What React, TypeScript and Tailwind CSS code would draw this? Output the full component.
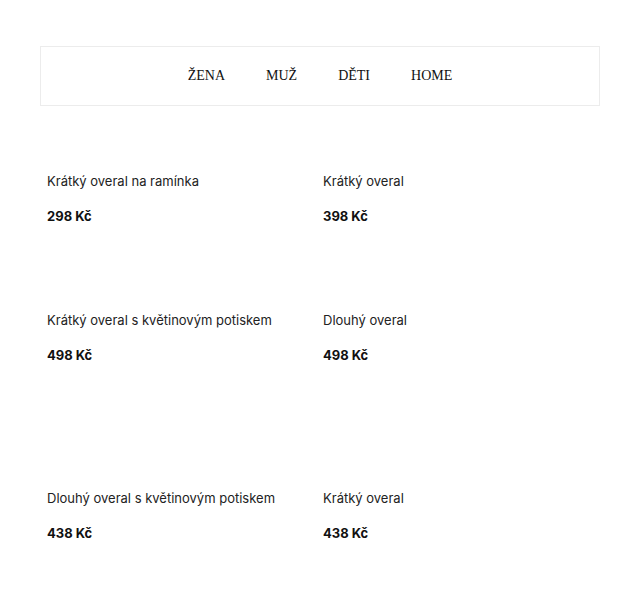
import React from "react";

const NAV = ["ŽENA", "MUŽ", "DĚTI", "HOME"];

const ROWS: { cls: string; items: { name: string; price: string }[] }[] = [
  {
    cls: "h-[139px]",
    items: [
      { name: "Krátký overal na ramínka", price: "298 Kč" },
      { name: "Krátký overal", price: "398 Kč" },
    ],
  },
  {
    cls: "h-[178px]",
    items: [
      { name: "Krátký overal s květinovým potiskem", price: "498 Kč" },
      { name: "Dlouhý overal", price: "498 Kč" },
    ],
  },
  {
    cls: "h-[80px]",
    items: [
      { name: "Dlouhý overal s květinovým potiskem", price: "438 Kč" },
      { name: "Krátký overal", price: "438 Kč" },
    ],
  },
];

export default function App() {
  return (
    <div className="min-h-[600px] bg-white px-10 pt-[46px] text-[#111]">
      <nav className="flex h-[60px] items-center justify-center gap-[41px] border border-[#ececec] pb-[1px] font-['Liberation_Serif',serif] text-[14px] text-[#111]">
        {NAV.map((n) => (
          <a key={n} href="#">
            {n}
          </a>
        ))}
      </nav>

      <div className="mt-[65px] font-['Inter',sans-serif] text-[13px]">
        {ROWS.map((r, i) => (
          <div key={i} className={`grid grid-cols-[276px_1fr] ${r.cls}`}>
            {r.items.map((it) => (
              <div key={it.name + it.price} className="pl-[7px]">
                <p className="leading-[20px] text-[#222]">{it.name}</p>
                <p className="mt-[15px] font-bold leading-[20px]">{it.price}</p>
              </div>
            ))}
          </div>
        ))}
      </div>
    </div>
  );
}
